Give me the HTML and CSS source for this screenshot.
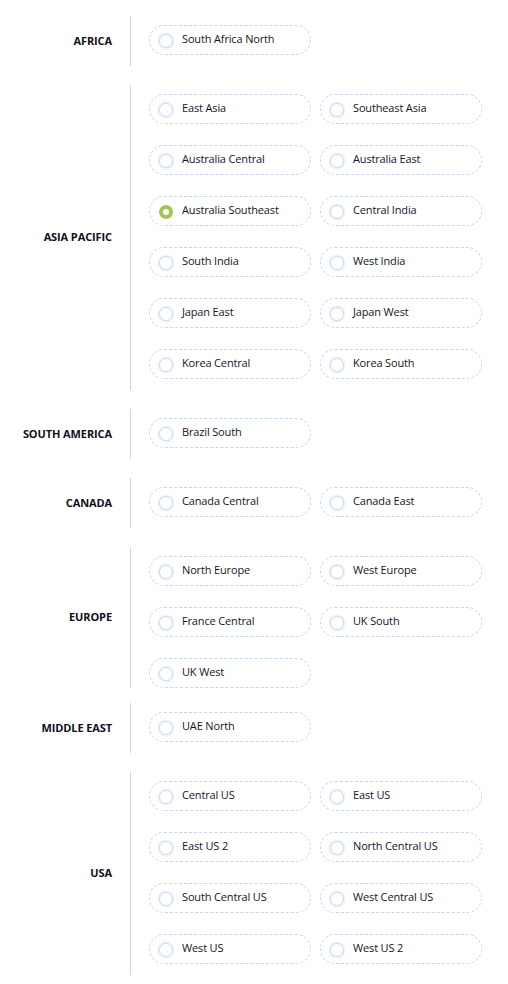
FILE: index.html
```html
<!DOCTYPE html>
<html>
<head>
<meta charset="utf-8">
<link rel="stylesheet" href="styles.css">
</head>
<body>
<div class="regions">
  <div class="group">
    <div class="label">AFRICA</div>
    <div class="options">
      <div class="pill"><span class="radio"></span><span class="name">South Africa North</span></div>
    </div>
  </div>
  <div class="group">
    <div class="label">ASIA PACIFIC</div>
    <div class="options">
      <div class="pill"><span class="radio"></span><span class="name">East Asia</span></div>
      <div class="pill"><span class="radio"></span><span class="name">Southeast Asia</span></div>
      <div class="pill"><span class="radio"></span><span class="name">Australia Central</span></div>
      <div class="pill"><span class="radio"></span><span class="name">Australia East</span></div>
      <div class="pill"><span class="radio checked"></span><span class="name">Australia Southeast</span></div>
      <div class="pill"><span class="radio"></span><span class="name">Central India</span></div>
      <div class="pill"><span class="radio"></span><span class="name">South India</span></div>
      <div class="pill"><span class="radio"></span><span class="name">West India</span></div>
      <div class="pill"><span class="radio"></span><span class="name">Japan East</span></div>
      <div class="pill"><span class="radio"></span><span class="name">Japan West</span></div>
      <div class="pill"><span class="radio"></span><span class="name">Korea Central</span></div>
      <div class="pill"><span class="radio"></span><span class="name">Korea South</span></div>
    </div>
  </div>
  <div class="group">
    <div class="label">SOUTH AMERICA</div>
    <div class="options">
      <div class="pill"><span class="radio"></span><span class="name">Brazil South</span></div>
    </div>
  </div>
  <div class="group">
    <div class="label">CANADA</div>
    <div class="options">
      <div class="pill"><span class="radio"></span><span class="name">Canada Central</span></div>
      <div class="pill"><span class="radio"></span><span class="name">Canada East</span></div>
    </div>
  </div>
  <div class="group group-tight">
    <div class="label">EUROPE</div>
    <div class="options">
      <div class="pill"><span class="radio"></span><span class="name">North Europe</span></div>
      <div class="pill"><span class="radio"></span><span class="name">West Europe</span></div>
      <div class="pill"><span class="radio"></span><span class="name">France Central</span></div>
      <div class="pill"><span class="radio"></span><span class="name">UK South</span></div>
      <div class="pill"><span class="radio"></span><span class="name">UK West</span></div>
    </div>
  </div>
  <div class="group">
    <div class="label">MIDDLE EAST</div>
    <div class="options">
      <div class="pill"><span class="radio"></span><span class="name">UAE North</span></div>
    </div>
  </div>
  <div class="group">
    <div class="label">USA</div>
    <div class="options">
      <div class="pill"><span class="radio"></span><span class="name">Central US</span></div>
      <div class="pill"><span class="radio"></span><span class="name">East US</span></div>
      <div class="pill"><span class="radio"></span><span class="name">East US 2</span></div>
      <div class="pill"><span class="radio"></span><span class="name">North Central US</span></div>
      <div class="pill"><span class="radio"></span><span class="name">South Central US</span></div>
      <div class="pill"><span class="radio"></span><span class="name">West Central US</span></div>
      <div class="pill"><span class="radio"></span><span class="name">West US</span></div>
      <div class="pill"><span class="radio"></span><span class="name">West US 2</span></div>
    </div>
  </div>
</div>
</body>
</html>
```
FILE: styles.css
```css
html, body {
  margin: 0;
  padding: 0;
  background: #ffffff;
  font-family: "Open Sans", "Noto Sans", "Liberation Sans", sans-serif;
  color: #1c1c28;
}

.regions {
  display: flex;
  flex-direction: column;
  gap: 19px;
  padding-top: 16px;
}

.group {
  display: grid;
  grid-template-columns: 130px auto;
  align-items: stretch;
}

.group-tight {
  margin-bottom: -4px;
}

.group-tight .options {
  padding-bottom: 0;
}

.label {
  align-self: center;
  text-align: right;
  font-size: 11px;
  font-weight: 700;
  letter-spacing: -0.1px;
  color: #10101a;
  padding-right: 18px;
  margin-bottom: 2px;
}

.options {
  border-left: 1px solid #c9d7ee;
  padding: 9px 0 11px 18px;
  display: grid;
  grid-template-columns: 162px 162px;
  column-gap: 9px;
  row-gap: 21px;
  align-content: start;
}

.pill {
  box-sizing: border-box;
  height: 30px;
  border: 1px dashed #c7d5ea;
  border-radius: 15px;
  display: flex;
  align-items: center;
  padding-left: 9px;
  font-size: 11px;
  color: #15151f;
}

.radio {
  box-sizing: border-box;
  width: 14px;
  height: 14px;
  border-radius: 50%;
  border: 1.5px solid #ccdaf1;
  box-shadow: 0 0 2px 1px rgba(190, 208, 238, 0.45);
  background: #ffffff;
  flex: none;
  margin-right: 9px;
  margin-top: 1px;
}

.radio.checked {
  border: 4.5px solid #a2c451;
  box-shadow: none;
  background: #ffffff;
}

.name {
  line-height: 14px;
  margin-top: -2px;
  letter-spacing: -0.15px;
}
```
